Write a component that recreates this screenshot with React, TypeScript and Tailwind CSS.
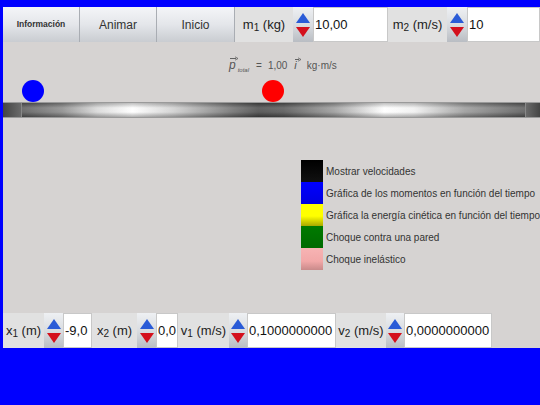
import React from "react";

const font = { fontFamily: '"Liberation Sans", Arial, sans-serif' };

function Spinner({ w = "w-[20px]" }: { w?: string }) {
  return (
    <div className={`flex flex-col ${w} h-full shrink-0`}>
      <div className="flex-1 flex items-end justify-center pb-[2px] bg-[linear-gradient(#eef0f3,#d9dce0)]">
        <div className="w-0 h-0 border-l-[7px] border-r-[7px] border-b-[10px] border-l-transparent border-r-transparent border-b-[#2a5bd7]" />
      </div>
      <div className="flex-1 flex items-start justify-center pt-[2px] bg-[linear-gradient(#d9dce0,#b9bdc3)]">
        <div className="w-0 h-0 border-l-[7px] border-r-[7px] border-t-[10px] border-l-transparent border-r-transparent border-t-[#d4101c]" />
      </div>
    </div>
  );
}

function Label({ base, sub, rest, w }: { base: string; sub: string; rest: string; w: string }) {
  return (
    <div className={`${w} h-full shrink-0 flex items-center justify-center bg-[#e1e1e1] text-[13px] text-[#222] whitespace-nowrap`}>
      <span>
        {base}
        <sub className="text-[10px]">{sub}</sub> {rest}
      </span>
    </div>
  );
}

function Field({ value, w }: { value: string; w: string }) {
  return (
    <div className={`${w} h-full shrink-0 flex items-center bg-white border border-[#c8c8c8] pl-[1px] text-[13px] text-[#111] whitespace-nowrap overflow-hidden`}>
      {value}
    </div>
  );
}

function Btn({ children, w, small }: { children: React.ReactNode; w: string; small?: boolean }) {
  return (
    <div
      className={`${w} h-full shrink-0 flex items-center justify-center border-r border-[#a9adb3] bg-[linear-gradient(#f4f5f8,#e4e6ea_50%,#c9ccd1)] ${
        small ? "text-[8.5px] font-bold" : "text-[12px]"
      } text-[#333]`}
    >
      {children}
    </div>
  );
}

function LegendRow({ cls, text }: { cls: string; text: string }) {
  return (
    <div className="flex items-center h-[22px]">
      <div className={`w-[22px] h-[22px] shrink-0 ${cls}`} />
      <span className="ml-[3px] text-[10px] text-[#333] whitespace-nowrap">{text}</span>
    </div>
  );
}

function VecArrow({ w }: { w: number }) {
  return (
    <svg width={w + 3} height="5" viewBox={`0 0 ${w + 3} 5`} className="absolute left-[1px] top-[-3px]">
      <line x1="0" y1="2.5" x2={w} y2="2.5" stroke="#555" strokeWidth="0.9" />
      <path d={`M${w - 1} 0.8 L${w + 2} 2.5 L${w - 1} 4.2`} fill="none" stroke="#555" strokeWidth="0.7" />
    </svg>
  );
}

export default function App() {
  return (
    <div style={font} className="w-[540px] h-[405px] bg-[#0000ff] overflow-hidden pt-[7px] pl-[3px]">
      <div className="h-[341px] bg-[#d6d3d2] flex flex-col">
        {/* toolbar */}
        <div className="h-[35px] flex shrink-0">
          <Btn w="w-[77px]" small>
            Información
          </Btn>
          <Btn w="w-[77px]">Animar</Btn>
          <Btn w="w-[78px]">Inicio</Btn>
          <Label base="m" sub="1" rest="(kg)" w="w-[58px]" />
          <Spinner />
          <Field value="10,00" w="w-[75px]" />
          <Label base="m" sub="2" rest="(m/s)" w="w-[59px]" />
          <Spinner />
          <Field value="10" w="w-[73px]" />
        </div>

        {/* canvas */}
        <div className="relative flex-1">
          <div className="absolute left-[226px] top-[16px] flex items-baseline text-[10px] text-[#555]">
            <span className="relative italic text-[12px] leading-none">
              p
              <VecArrow w={6} />
            </span>
            <span className="italic text-[6px] ml-[2px] translate-y-[3px]">total</span>
            <span className="ml-[7px]">=</span>
            <span className="ml-[6px]">1,00</span>
            <span className="relative italic ml-[7px] text-[11px] leading-none">
              i
              <VecArrow w={4} />
            </span>
            <span className="ml-[10px]">kg·m/s</span>
          </div>

          {/* balls */}
          <div className="absolute left-[19px] top-[38px] w-[22px] h-[22px] rounded-full bg-[#0000ff]" />
          <div className="absolute left-[259px] top-[38px] w-[22px] h-[22px] rounded-full bg-[#ff0000]" />

          {/* track */}
          <div className="absolute left-0 right-0 top-[60px] h-[16px] flex border-y border-[#9a9a9a]">
            <div className="w-[19px] h-full bg-[linear-gradient(90deg,#444,#6a6a6a)] border-r border-[#888]" />
            <div className="flex-1 h-full bg-[linear-gradient(90deg,#5a5a5a_0%,#8a8a8a_8%,#d8d8d8_15%,#ffffff_22%,#d0d0d0_30%,#6e6e6e_42%,#4a4a4a_47%,#555_52%,#9a9a9a_62%,#ffffff_72%,#f0f0f0_78%,#9a9a9a_88%,#5a5a5a_100%)] relative">
              <div className="absolute inset-0 bg-[linear-gradient(rgba(0,0,0,0.25),rgba(255,255,255,0.15)_35%,rgba(255,255,255,0.1)_65%,rgba(0,0,0,0.3))]" />
            </div>
            <div className="w-[15px] h-full bg-[linear-gradient(90deg,#6a6a6a,#444)] border-l border-[#888]" />
          </div>

          {/* legend */}
          <div className="absolute left-[298px] top-[118px] flex flex-col">
            <LegendRow cls="bg-[linear-gradient(#000,#111)]" text="Mostrar velocidades" />
            <LegendRow cls="bg-[linear-gradient(#0000ff,#0000e0)]" text="Gráfica de los momentos en función del tiempo" />
            <LegendRow cls="bg-[linear-gradient(#ffff00,#ffff00_55%,#a8a800)]" text="Gráfica la energía cinética en función del tiempo" />
            <LegendRow cls="bg-[linear-gradient(#007a00,#006a00)]" text="Choque contra una pared" />
            <LegendRow cls="bg-[linear-gradient(#f7b4b4,#f2a8a8_60%,#c98a8a)]" text="Choque inelástico" />
          </div>
        </div>

        {/* bottom bar */}
        <div className="h-[35px] flex shrink-0">
          <Label base="x" sub="1" rest="(m)" w="w-[41px]" />
          <Spinner w="w-[19px]" />
          <Field value="-9,0" w="w-[29px]" />
          <Label base="x" sub="2" rest="(m)" w="w-[45px]" />
          <Spinner w="w-[19px]" />
          <Field value="0,0" w="w-[22px]" />
          <Label base="v" sub="1" rest="(m/s)" w="w-[51px]" />
          <Spinner w="w-[18px]" />
          <Field value="0,1000000000" w="w-[89px]" />
          <Label base="v" sub="2" rest="(m/s)" w="w-[50px]" />
          <Spinner w="w-[18px]" />
          <Field value="0,0000000000" w="w-[88px]" />
        </div>
      </div>
    </div>
  );
}
